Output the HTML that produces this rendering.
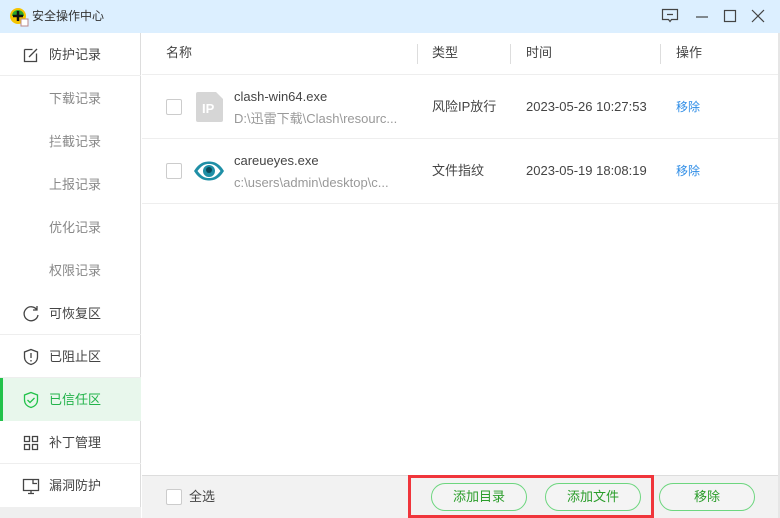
<!DOCTYPE html><html><head><meta charset="utf-8"><style>
*{margin:0;padding:0;box-sizing:border-box}
body{width:780px;height:518px;overflow:hidden;font-family:"Liberation Sans","Noto Sans CJK SC",sans-serif;font-size:13px;color:#444;background:#fff;position:relative}
.a{position:absolute}
span.a{line-height:18px;white-space:nowrap}
.title{left:0;top:0;width:780px;height:33px;background:#dcefff}
.side{left:0;top:33px;width:141px;height:485px;border-right:1px solid #ddd;background:#fff}
.it{position:absolute;left:0;width:141px;height:43px;line-height:43px;font-size:13px;color:#444}
.it .t{position:absolute;left:49px}
.it svg{position:absolute;left:22px;top:13px}
.sub{color:#888}
.line{border-bottom:1px solid #eee}
.cb{position:absolute;width:16px;height:16px;border:1px solid #ccc;border-radius:2px;background:#fff}
.btn{position:absolute;top:483px;height:28px;width:96px;border:1px solid #6dd67f;border-radius:14px;text-align:center;line-height:26px;color:#2a9d2a;background:#f4f4f4}
</style></head><body>
<div class="a title">
<svg class="a" style="left:9px;top:7px" width="20" height="20" viewBox="0 0 20 20"><circle cx="9" cy="9" r="8" fill="#f5c400"/><path d="M3 9a6 6 0 0 1 12 0" fill="#2aa52a"/><path d="M9 4v10M4 9h10" stroke="#111" stroke-width="2.5"/><rect x="12" y="12" width="7" height="7" fill="#fff" stroke="#b88" stroke-width="1"/></svg>
<span class="a" style="left:32px;top:7px;font-size:12px;color:#333">安全操作中心</span>
<svg class="a" style="left:661px;top:8px" width="18" height="16"><path d="M1.5 1.5h15v10h-6l-1.5 2-1.5-2h-6z M6 6.5h6" fill="none" stroke="#444" stroke-width="1.2"/></svg>
<svg class="a" style="left:694px;top:8px" width="16" height="16"><path d="M2 9h12" stroke="#444" stroke-width="1.2"/></svg>
<svg class="a" style="left:722px;top:8px" width="16" height="16"><rect x="2.5" y="2.5" width="11" height="11" fill="none" stroke="#444" stroke-width="1.2"/></svg>
<svg class="a" style="left:750px;top:8px" width="16" height="16"><path d="M2 2l12 12M14 2L2 14" stroke="#444" stroke-width="1.2"/></svg>
</div>
<div class="a side">
<div class="it line" style="top:0"><svg width="18" height="18"><path d="M2.5 3.5h8M2.5 3.5v12h12v-8M7 11l8-8" fill="none" stroke="#444" stroke-width="1.3"/></svg><span class="t">防护记录</span></div>
<div class="it sub" style="top:44px"><span class="t">下载记录</span></div>
<div class="it sub" style="top:87px"><span class="t">拦截记录</span></div>
<div class="it sub" style="top:130px"><span class="t">上报记录</span></div>
<div class="it sub" style="top:173px"><span class="t">优化记录</span></div>
<div class="it sub" style="top:216px"><span class="t">权限记录</span></div>
<div class="it line" style="top:259px"><svg width="18" height="18"><path d="M15 5A7 7 0 1 0 16 10M15 1v4h-4" fill="none" stroke="#444" stroke-width="1.3"/></svg><span class="t">可恢复区</span></div>
<div class="it line" style="top:302px"><svg width="18" height="18"><path d="M9 1.5l6.5 2.5v5c0 4-3 6.5-6.5 7.5C5.5 15.5 2.5 13 2.5 9V4z M9 5v5M9 12v1.5" fill="none" stroke="#444" stroke-width="1.3"/></svg><span class="t">已阻止区</span></div>
<div class="it" style="top:345px;background:#e8f7ec;color:#22b34a"><div class="a" style="left:0;top:0;width:3px;height:43px;background:#22c24a"></div><svg width="18" height="18"><path d="M9 1.5l6.5 2.5v5c0 4-3 6.5-6.5 7.5C5.5 15.5 2.5 13 2.5 9V4z M5.5 9l2.5 2.5 4.5-4.5" fill="none" stroke="#22c24a" stroke-width="1.3"/></svg><span class="t">已信任区</span></div>
<div class="it line" style="top:388px"><svg width="18" height="18"><path d="M2.5 2.5h5v5h-5zM10.5 2.5h5v5h-5zM2.5 10.5h5v5h-5zM10.5 10.5h5v5h-5z" fill="none" stroke="#444" stroke-width="1.3"/></svg><span class="t">补丁管理</span></div>
<div class="it" style="top:431px"><svg width="18" height="18"><path d="M1.5 2.5h15v11h-15zM6 16.5h6M9 13.5v3M11 2.5v4h4" fill="none" stroke="#444" stroke-width="1.3"/></svg><span class="t">漏洞防护</span></div>
<div class="a" style="left:0;top:474px;width:141px;height:11px;background:#efefef"></div>
</div>
<div class="a" style="left:142px;top:33px;width:636px;height:42px;border-bottom:1px solid #eee"></div>
<span class="a" style="left:166px;top:44px">名称</span>
<div class="a" style="left:417px;top:44px;width:1px;height:20px;background:#ddd"></div>
<span class="a" style="left:432px;top:44px">类型</span>
<div class="a" style="left:510px;top:44px;width:1px;height:20px;background:#ddd"></div>
<span class="a" style="left:526px;top:44px">时间</span>
<div class="a" style="left:660px;top:44px;width:1px;height:20px;background:#ddd"></div>
<span class="a" style="left:676px;top:44px">操作</span>
<div class="a" style="left:142px;top:75px;width:636px;height:64px;border-bottom:1px solid #eee"></div>
<div class="cb" style="left:166px;top:99px"></div>
<svg class="a" style="left:196px;top:92px" width="27" height="30"><path d="M2 0h18l7 7v21a2 2 0 0 1-2 2H2a2 2 0 0 1-2-2V2a2 2 0 0 1 2-2z" fill="#d6d6d6"/><text x="6" y="21" font-family="Liberation Sans" font-weight="bold" font-size="13" fill="#fff">IP</text></svg>
<span class="a" style="left:234px;top:88px">clash-win64.exe</span>
<span class="a" style="left:234px;top:110px;color:#999">D:\迅雷下载\Clash\resourc...</span>
<span class="a" style="left:432px;top:98px">风险IP放行</span>
<span class="a" style="left:526px;top:98px">2023-05-26 10:27:53</span>
<span class="a" style="left:676px;top:98px;color:#2d8ce6;font-size:12px">移除</span>
<div class="a" style="left:142px;top:140px;width:636px;height:64px;border-bottom:1px solid #eee"></div>
<div class="cb" style="left:166px;top:163px"></div>
<svg class="a" style="left:193px;top:160px" width="32" height="22"><path d="M1 11C6 3 11 1.5 16 1.5S26 3 31 11C26 19 21 20.5 16 20.5S6 19 1 11z" fill="#1f8fa6"/><path d="M4.5 11C9 5 12 4 16 4s7 1 11.5 7C23 17 20 18 16 18s-7-1-11.5-7z" fill="#fff"/><circle cx="16" cy="11" r="6" fill="#1f8fa6"/><circle cx="16" cy="10" r="3" fill="#0b4a5a"/></svg>
<span class="a" style="left:234px;top:152px">careueyes.exe</span>
<span class="a" style="left:234px;top:174px;color:#999">c:\users\admin\desktop\c...</span>
<span class="a" style="left:432px;top:162px">文件指纹</span>
<span class="a" style="left:526px;top:162px">2023-05-19 18:08:19</span>
<span class="a" style="left:676px;top:162px;color:#2d8ce6;font-size:12px">移除</span>
<div class="a" style="left:778px;top:33px;width:2px;height:485px;background:#e6e6e6"></div>
<div class="a" style="left:142px;top:475px;width:636px;height:43px;background:#f2f2f2;border-top:1px solid #ddd"></div>
<div class="cb" style="left:166px;top:489px"></div>
<span class="a" style="left:189px;top:488px">全选</span>
<div class="btn" style="left:431px">添加目录</div>
<div class="btn" style="left:545px">添加文件</div>
<div class="btn" style="left:659px">移除</div>
<div class="a" style="left:408px;top:475px;width:246px;height:43px;border:3px solid #f0353b"></div>
</body></html>
